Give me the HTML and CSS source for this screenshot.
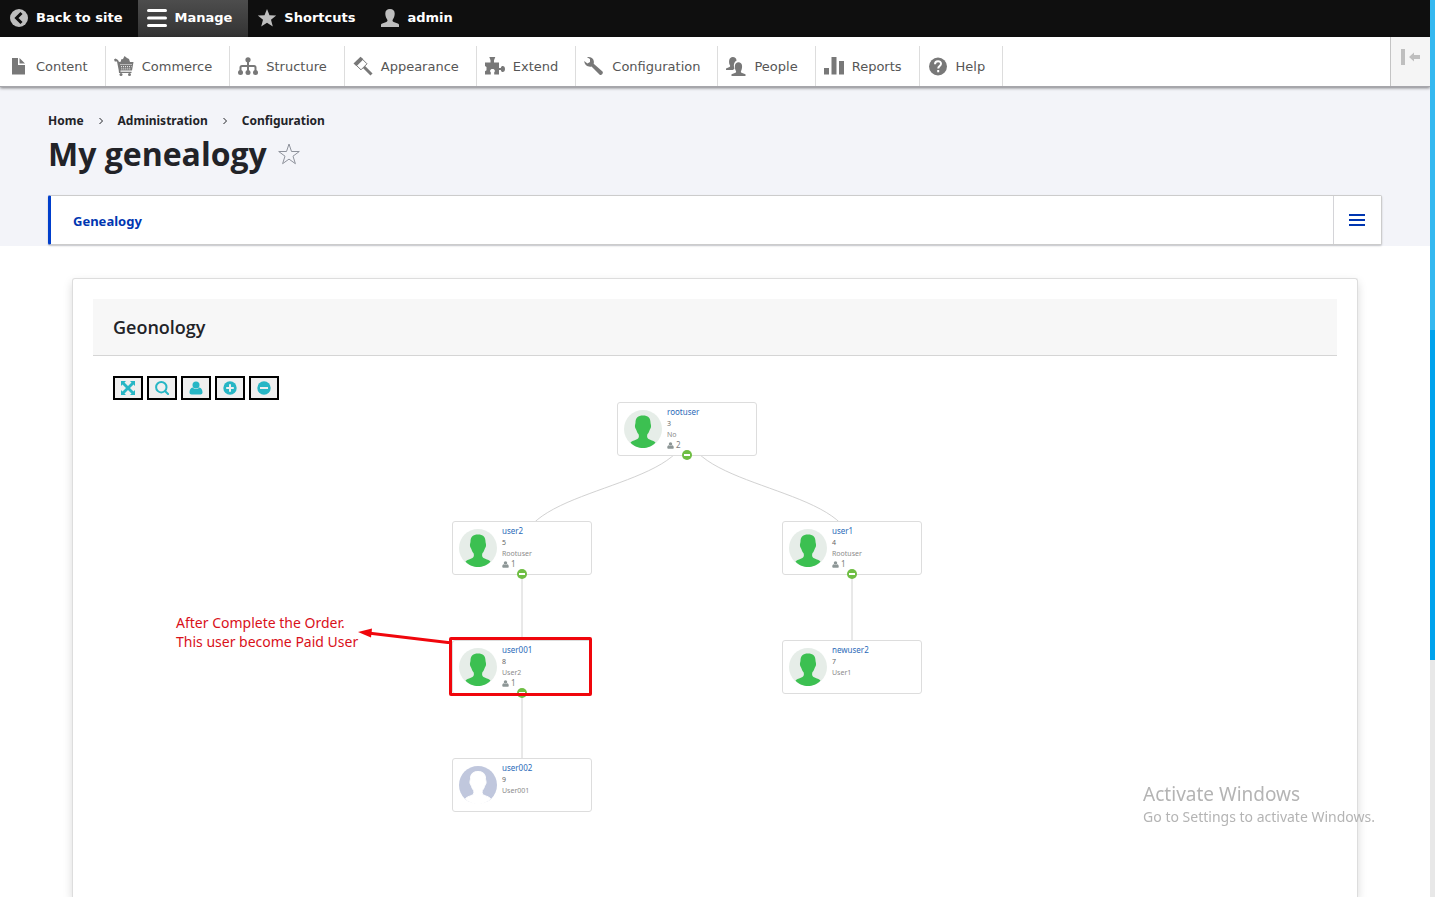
FILE: index.html
```html
<!DOCTYPE html>
<html lang="en">
<head>
  <meta charset="UTF-8">
  <title>My genealogy</title>
  <link rel="stylesheet" href="styles.css">
</head>
<body>

  <!-- shared shapes -->
  <svg class="defs" width="0" height="0">
    <symbol id="head" viewBox="0 0 38 38">
      <path d="M19 5.500c5 0 7.500 2.500 7.500 7 0 1.500.8 2.500.5 4.500-.3 1.800-1 2-1.500 3.500-.6 2-1.500 3-2.300 4.200-.4 3 .3 4 3 5 2.500 1 4.300 1.600 5.300 2.800C28 36.500 23.500 38 19 38s-9-1.500-12.500-5.500c1-1.200 2.800-1.800 5.300-2.800 2.700-1 3.400-2 3-5-.8-1.200-1.700-2.200-2.300-4.200-.5-1.500-1.200-1.700-1.500-3.500-.3-2 .5-3 .5-4.500 0-4.500 2.500-7 7.500-7z"/>
    </symbol>
    <symbol id="user" viewBox="0 0 14 14">
      <circle cx="7" cy="4" r="3.500"/>
      <path d="M3.800 6.500C5.500 8.600 8.500 8.600 10.200 6.500c2.300.3 3.300 2.500 3.300 5 0 1.300-.8 2-2 2h-9c-1.200 0-2-.7-2-2 0-2.500 1-4.700 3.300-5z"/>
    </symbol>
    <symbol id="person" viewBox="0 0 20 20">
      <path d="M1 19v-2c0-.8.500-1.300 1.300-1.600l4-1.400c1.200-.5 1.400-1.500.9-2.500C5.800 9.500 5.300 7.500 5.300 5.500 5.300 2.500 7 1 10 1s4.700 1.500 4.700 4.500c0 2-.5 4-1.900 6-.5 1-.3 2 .9 2.500l4 1.400c.8.300 1.300.8 1.300 1.600v2z"/>
    </symbol>
  </svg>

  <div class="page">
    <nav class="bar">
      <a href="#"><svg viewBox="0 0 20 20"><circle cx="10" cy="10" r="9"/><path class="cut-dark" d="M12.500 5 7.500 10l5 5"/></svg>Back to site</a>
      <a href="#" class="active"><svg viewBox="0 0 20 20"><path class="lines" d="M1.500 2.500h17M1.500 10h17M1.500 17.500h17"/></svg>Manage</a>
      <a href="#"><svg viewBox="0 0 20 20"><path d="m10 1 2.500 6.300 6.700.3-5.200 4.200 1.800 6.700L10 14.700l-5.800 3.800L6 11.800.8 7.600l6.700-.3z"/></svg>Shortcuts</a>
      <a href="#"><svg viewBox="0 0 20 20"><use href="#person"/></svg>admin</a>
    </nav>

    <nav class="tray">
      <a href="#"><svg viewBox="0 0 20 20"><path d="M3 2h6v7h7v9.500H3zM10.500 2 16 7.500h-5.500z"/></svg>Content</a>
      <a href="#"><svg viewBox="0 0 20 20"><path d="M0 3.500 1.500 2.500 4 4l1 2 2-.5V3.500L9 3l1.500-3L13 2l2 1 1 3h3.500l-1.500 8.500H6.500v1.200h11V17H5l-.3-3L3 5.500H.8z"/><circle cx="7" cy="18.500" r="1.500"/><circle cx="15.500" cy="18.500" r="1.500"/><path class="dots" d="M6.500 8.500h11.500M7 10.700h10.500M7.300 12.900h10"/></svg>Commerce</a>
      <a href="#"><svg viewBox="0 0 20 20"><circle cx="10" cy="3.800" r="2.600"/><circle cx="2.500" cy="16.500" r="2.500"/><circle cx="10" cy="16.500" r="2.500"/><circle cx="17.500" cy="16.500" r="2.500"/><path class="wire" d="M10 4v12M2.500 16v-4.500q0-1.500 1.500-1.500h12q1.500 0 1.500 1.500V16"/></svg>Structure</a>
      <a href="#"><svg viewBox="0 0 20 20"><path d="M.5 7.500 7.500.8l3 2.500-7 7z"/><path class="thin" d="m3.500 9.500 4.500 4.300 6-6-4-4"/><path class="handle" d="m11 11 7.500 7.500"/></svg>Appearance</a>
      <a href="#"><svg viewBox="0 0 20 20"><path d="M0 6.500h5.500V4.300L4.300 1h6L9 4.300v2.200h5V12h1.800c.3-1.500 1-2 1.900-2 1.400 0 2.300 1.300 2.300 3s-.9 3-2.300 3c-.9 0-1.600-.5-1.900-2H14v4.500H9.200v-2.300c1-.5 1.200-3.200-1.700-3.200s-2.700 2.700-1.700 3.200v2.300H0v-3.300l1.500-1V11L0 10z"/></svg>Extend</a>
      <a href="#"><svg viewBox="0 0 20 20"><path d="M3 1.300C6 .5 9.300 2.300 9.800 5c.2 1 .1 1.800-.1 2.700l8.800 7.800c1.300 1.300-1 4.500-2.800 3.200L7.500 10.500C4.500 11.300.5 9.500.2 5l3.200 2.400L6 5.900V3.100z"/></svg>Configuration</a>
      <a href="#"><svg viewBox="0 0 20 20"><path d="M0 14v-1.500l3.500-1.500c1-.6.700-1.200.3-2C2.500 6.500 2.700 1 6.800 1 9 1 10.500 2.200 10.500 4.700 7.500 6 7.500 10 8.500 12.500L7 14z"/><path d="M5.500 20v-1.700l4-1.500c.8-.5.700-1.200.3-2C8.300 11.500 8.300 6.200 12.500 6.200s4.200 5.300 2.700 8.600c-.4.800-.5 1.500.3 2l4 1.500V20z"/></svg>People</a>
      <a href="#"><svg viewBox="0 0 20 20"><path d="M0 12h5v6.500H0zM7.500 1h5v17.500h-5zM15 5h5v13.500h-5z"/></svg>Reports</a>
      <a href="#"><svg viewBox="0 0 20 20"><circle cx="10" cy="10.500" r="9"/><path class="cut-light" d="M7 8.200c0-4 6-4 6-.4 0 2.200-2.800 2.200-2.800 4.700M10.200 14v2.200"/></svg>Help</a>
      <button class="collapse" aria-label="Vertical orientation">
        <svg viewBox="0 0 20 16"><path d="M0 0h4v16H0zM8 8l5-4.500V6h6v4h-6v2.500z"/></svg>
      </button>
    </nav>

    <header class="header">
      <div class="breadcrumb">
        <a href="#">Home</a><svg viewBox="0 0 6 8"><path d="m1.500 1 3 3-3 3"/></svg>
        <a href="#">Administration</a><svg viewBox="0 0 6 8"><path d="m1.500 1 3 3-3 3"/></svg>
        <a href="#">Configuration</a>
      </div>
      <div class="title">
        <h1>My genealogy</h1>
        <svg viewBox="0 0 22 22"><path d="m11 1 2.500 7.500h7.800L15 13.200l2.400 7.500L11 16.100l-6.400 4.600L7 13.200.7 8.500h7.800z"/></svg>
      </div>
      <div class="tabs">
        <a href="#">Genealogy</a>
        <button aria-label="Tabs menu"><svg viewBox="0 0 16 12"><path d="M0 1h16M0 6h16M0 11h16"/></svg></button>
      </div>
    </header>

    <main class="card">
      <h2>Geonology</h2>
      <div class="tools">
        <button aria-label="Fit"><svg viewBox="0 0 14 14"><path d="M0 0h5L3.500 1.500 7 5l3.500-3.500L9 0h5v5l-1.500-1.500L9 7l3.500 3.500L14 9v5H9l1.500-1.500L7 9l-3.500 3.500L5 14H0V9l1.500 1.500L5 7 1.500 3.500 0 5z"/></svg></button>
        <button aria-label="Search"><svg viewBox="0 0 14 14"><path class="lens" d="M11.500 6.200A5.200 5.200 0 1 1 1.100 6.200a5.200 5.200 0 0 1 10.400 0zM10 10l3.800 3.800"/></svg></button>
        <button aria-label="User"><svg viewBox="0 0 14 14"><use href="#user"/></svg></button>
        <button aria-label="Expand"><svg viewBox="0 0 14 14"><circle cx="7" cy="7" r="6.700"/><path class="sign" d="M3.200 7h7.600M7 3.200v7.600"/></svg></button>
        <button aria-label="Collapse"><svg viewBox="0 0 14 14"><circle cx="7" cy="7" r="6.700"/><path class="sign" d="M3 7h8"/></svg></button>
      </div>

      <div class="tree">
        <svg class="links" viewBox="0 0 1078 420">
          <path d="M511 29C511 88 346 88 346 148M511 29C511 88 676 88 676 148M346 148v240M676 148v119"/>
        </svg>
        <div id="nodes"></div>
        <p class="note">After Complete the Order.<br>This user become Paid User</p>
        <div class="marker"></div>
        <svg class="arrow" viewBox="0 0 96 16">
          <path class="shaft" d="M10 5 94 15"/>
          <path d="M0 4 14 .5l-1 9z"/>
        </svg>
      </div>
    </main>
  </div>

  <div class="edge"></div>

  <div class="activate">
    <p class="big">Activate Windows</p>
    <p>Go to Settings to activate Windows.</p>
  </div>

  <script>
    const users = [
      { name: 'rootuser', id: 3, parent: 'No', count: 2, x: 441, y: 2 },
      { name: 'user2', id: 5, parent: 'Rootuser', count: 1, x: 276, y: 121 },
      { name: 'user1', id: 4, parent: 'Rootuser', count: 1, x: 606, y: 121 },
      { name: 'user001', id: 8, parent: 'User2', count: 1, x: 276, y: 240 },
      { name: 'newuser2', id: 7, parent: 'User1', count: 0, x: 606, y: 240 },
      { name: 'user002', id: 9, parent: 'User001', count: 0, x: 276, y: 358, unpaid: true }
    ];

    const container = document.getElementById('nodes');
    users.forEach(user => {
      const div = document.createElement('div');
      div.className = user.unpaid ? 'node unpaid' : 'node';
      div.style.left = user.x + 'px';
      div.style.top = user.y + 'px';
      div.innerHTML = `
        <svg class="avatar" viewBox="0 0 38 38"><circle cx="19" cy="19" r="19"/><use href="#head"/></svg>
        <div class="info">
          <a href="#">${user.name}</a>
          <span class="uid">${user.id}</span>
          <span class="parent">${user.parent}</span>
          ${user.count ? `<span class="count"><svg viewBox="0 0 14 14"><use href="#user"/></svg>${user.count}</span>` : ''}
        </div>
        ${user.count ? '<button class="toggle" aria-label="Collapse"></button>' : ''}
      `;
      container.appendChild(div);
    });
  </script>

</body>
</html>
```
FILE: styles.css
```css
body {
  margin: 0;
  font-family: 'Open Sans', 'Noto Sans', sans-serif;
  color: #222328;
  background: white;
}

a {
  color: inherit;
  text-decoration: none;
}

button {
  padding: 0;
  border: none;
  cursor: pointer;
}

h1, h2, p {
  margin: 0;
}

.defs {
  position: absolute;
}

.page {
  display: flex;
  flex-direction: column;
  min-height: 100vh;
  margin-right: 5px;
}

/* admin toolbar */
.bar {
  display: flex;
  height: 37px;
  background: #0f0f0f;
  font: bold 13px 'DejaVu Sans', sans-serif;
  color: white;
}

.bar a {
  display: flex;
  align-items: center;
  padding: 0 16px 2px 9px;
}

.bar a.active {
  background: linear-gradient(#4d4d4d, #333);
}

.bar svg, .tray a svg {
  width: 20px;
  height: 20px;
  margin-right: 7px;
}

.bar svg {
  fill: #bebebe;
}

.bar .cut-dark {
  fill: none;
  stroke: #0f0f0f;
  stroke-width: 3;
}

.bar .lines {
  stroke: white;
  stroke-width: 3;
  stroke-linecap: round;
}

.tray {
  display: flex;
  position: relative;
  height: 49px;
  border-bottom: 1px solid #a6a6ab;
  box-shadow: 0 1px 3px rgba(0, 0, 0, 0.5);
  font: 13px 'DejaVu Sans', sans-serif;
  color: #565656;
}

.tray a {
  display: flex;
  align-items: center;
  margin-top: 9px;
  padding: 0 17px 0 9px;
  border-right: 1px solid #ddd;
}

/* icons sit closer to the divider than in the first item */
.tray a + a {
  padding-left: 8px;
}

.tray a + a svg {
  margin-right: 8px;
}

.tray svg {
  fill: #787878;
}

.tray .dots {
  stroke: white;
  stroke-width: 1;
  stroke-dasharray: 1 1;
}

.tray .wire, .tray .thin, .tray .handle {
  fill: none;
  stroke: #787878;
  stroke-width: 2;
}

.tray .thin {
  stroke-width: 1;
}

.tray .handle {
  stroke-width: 3;
}

.tray .cut-light {
  fill: none;
  stroke: white;
  stroke-width: 2;
}

.collapse {
  width: 40px;
  margin-left: auto;
  border-left: 1px solid #c4c4c4;
  background: #f5f5f5;
}

.collapse svg {
  display: block;
  width: 20px;
  height: 16px;
  margin: 0 auto 9px;
  fill: #bfbfbf;
}

/* page header */
.header {
  padding: 26px 48px 1px;
  background: #f3f4f9;
}

.breadcrumb {
  display: flex;
  align-items: center;
  gap: 14px;
  font-family: 'Noto Sans', sans-serif;
  font-size: 12px;
  font-weight: bold;
  line-height: 16px;
}

.breadcrumb svg {
  width: 6px;
  height: 8px;
  fill: none;
  stroke: #222328;
}

.title {
  display: flex;
  align-items: center;
  gap: 11px;
  margin: 5px 0 21px;
}

.title h1 {
  font-size: 32px;
  line-height: 40px;
}

.title svg {
  width: 22px;
  height: 22px;
  fill: none;
  stroke: #8e929c;
}

.tabs {
  display: flex;
  justify-content: space-between;
  height: 48px;
  border: 1px solid #ccc;
  border-left: 3px solid #003ecc;
  border-radius: 2px;
  background: white;
  box-shadow: 0 1px 2px rgba(0, 0, 0, 0.2);
}

.tabs a {
  padding-left: 22px;
  font-family: 'Noto Sans', sans-serif;
  font-size: 13px;
  font-weight: bold;
  line-height: 50px;
  color: #0036b1;
}

.tabs button {
  width: 48px;
  padding: 2px 2px 0 0;
  border-left: 1px solid #d4d4d8;
  background: white;
}

.tabs svg {
  width: 16px;
  height: 12px;
  stroke: #0036b1;
  stroke-width: 2;
}

/* genealogy card */
.card {
  flex: 1;
  margin: 32px 72px 0;
  padding: 20px 20px 0;
  border: 1px solid #ddd;
  border-bottom: none;
  border-radius: 3px 3px 0 0;
  box-shadow: 0 4px 10px rgba(0, 0, 0, 0.15);
}

.card h2 {
  padding-left: 20px;
  border-bottom: 1px solid #d5d5d5;
  background: #f7f7f7;
  font-size: 18px;
  font-weight: 600;
  line-height: 56px;
}

.tools {
  display: flex;
  gap: 4px;
  padding: 20px 20px 0;
}

.tools button {
  display: flex;
  align-items: center;
  justify-content: center;
  width: 30px;
  height: 24px;
  border: 2px solid black;
  background: #efefef;
}

.tools svg {
  width: 14px;
  height: 14px;
  fill: #27b6c5;
}

.tools .lens {
  fill: none;
  stroke: #27b6c5;
  stroke-width: 2;
}

.tools .sign {
  stroke: #efefef;
  stroke-width: 2;
}

/* the tree is a free canvas */
.tree {
  position: relative;
  width: 1078px;
  height: 420px;
  margin: 0 auto;
}

.links {
  position: absolute;
  width: 1078px;
  height: 420px;
  fill: none;
  stroke: #d2d2d2;
}

.node {
  position: absolute;
  display: flex;
  gap: 5px;
  box-sizing: border-box;
  width: 140px;
  height: 54px;
  padding: 3px 6px;
  border: 1px solid #ddd;
  border-radius: 3px;
  background: white;
}

.avatar {
  width: 38px;
  height: 38px;
  margin-top: 4px;
  fill: #3cc051;
}

.avatar circle {
  fill: #e6ede8;
}

.unpaid .avatar {
  fill: white;
  stroke: white;
}

.unpaid .avatar circle {
  fill: #c0c7dd;
  stroke: none;
}

.info {
  display: flex;
  flex-direction: column;
  font-family: 'Noto Sans', sans-serif;
  font-size: 7px;
  line-height: 11px;
}

.info a {
  font-size: 8px;
  line-height: 12px;
  color: #2b6ab8;
}

.uid {
  color: #666;
}

.parent {
  color: #8c8c8c;
}

.count {
  display: flex;
  align-items: center;
  gap: 2px;
  font-size: 8px;
  line-height: 10px;
  color: #808080;
}

.count svg {
  width: 7px;
  height: 7px;
  fill: #8d9696;
}

.toggle {
  position: absolute;
  bottom: -5px;
  left: 64px;
  width: 10px;
  height: 10px;
  border-radius: 50%;
  background: #6fbe44;
}

.toggle::before {
  content: '';
  display: block;
  width: 6px;
  height: 2px;
  margin: 0 auto;
  background: white;
}

.note {
  position: absolute;
  top: 213px;
  font-family: 'Noto Sans', sans-serif;
  font-size: 14px;
  line-height: 19px;
  color: #d9101a;
}

.marker {
  position: absolute;
  top: 237px;
  left: 273px;
  box-sizing: border-box;
  width: 143px;
  height: 59px;
  border: 3px solid #f0060c;
  border-radius: 2px;
}

.arrow {
  position: absolute;
  top: 228px;
  left: 182px;
  width: 96px;
  height: 16px;
  fill: #f0060c;
}

.arrow .shaft {
  stroke: #f0060c;
  stroke-width: 3;
}

/* strip of the desktop beside the window */
.edge {
  position: fixed;
  top: 0;
  right: 0;
  width: 5px;
  height: 100%;
  background: linear-gradient(#35b8f0 330px, #00a2ed 330px, #00a2ed 660px, #e8e8e8 660px);
}

.activate {
  position: fixed;
  right: 60px;
  bottom: 70px;
  font-family: 'Noto Sans', sans-serif;
  font-size: 14px;
  line-height: 20px;
  color: #b4b4b4;
}

.activate .big {
  font-size: 19px;
  line-height: 26px;
}
```
